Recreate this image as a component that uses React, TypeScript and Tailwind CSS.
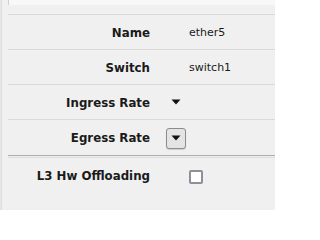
import { ReactNode } from "react";

function Caret({ className = "" }: { className?: string }) {
  return (
    <svg width="10" height="6" viewBox="0 0 10 6" className={className}>
      <polygon points="0.5,0.5 9.5,0.5 5,5.5" fill="#111" />
    </svg>
  );
}

function Row({ label, children, toggle, last }: { label: string; children?: ReactNode; toggle?: ReactNode; last?: string }) {
  return (
    <div className={`flex items-center h-[35px] ${last ?? "border-b border-[#d9d9d9]"}`}>
      <div className="w-[142px] text-right font-bold text-[11.8px] text-[#1a1a1a] pt-[3px]">{label}</div>
      <div className="w-[16px]" />
      <div className="w-[20px] flex items-center justify-center">{toggle}</div>
      <div className="w-[3px]" />
      <div className="text-[11px] text-[#1a1a1a] pt-[3px]">{children}</div>
    </div>
  );
}

export default function App() {
  return (
    <div
      className="w-[275px] h-[210px] bg-[#f0f0f0] flex overflow-hidden"
      style={{ fontFamily: '"DejaVu Sans", Verdana, sans-serif' }}
    >
      <div className="w-[2px] bg-[#e5e5e5] border-r border-[#dedede]" />
      <div className="w-[6px]" />
      <div className="flex-1 flex flex-col">
        <div className="h-[5px] bg-[#f8f8f8] border-l border-[#d0d0d0]" />
        <div className="h-[9px]" />
        <div className="border-t border-[#d9d9d9]">
          <Row label="Name">ether5</Row>
          <Row label="Switch">switch1</Row>
          <Row label="Ingress Rate" toggle={<Caret />} />
          <div className="border-b border-[#acacac]">
            <Row
              label="Egress Rate"
              last=""
              toggle={
                <div className="w-[20px] h-[21px] mt-[1px] rounded-[3px] border border-[#8c8c8c] bg-[#e4e4e4] shadow-[0_1px_1px_rgba(0,0,0,0.15)] flex items-center justify-center">
                  <Caret />
                </div>
              }
            />
          </div>
          <div className="h-[2px] border-b border-[#dcdcdc]" />
          <Row label="L3 Hw Offloading" last="">
            <div className="w-[14px] h-[14px] rounded-[2px] border-2 border-[#8f8f9c] bg-white" />
          </Row>
        </div>
      </div>
    </div>
  );
}
